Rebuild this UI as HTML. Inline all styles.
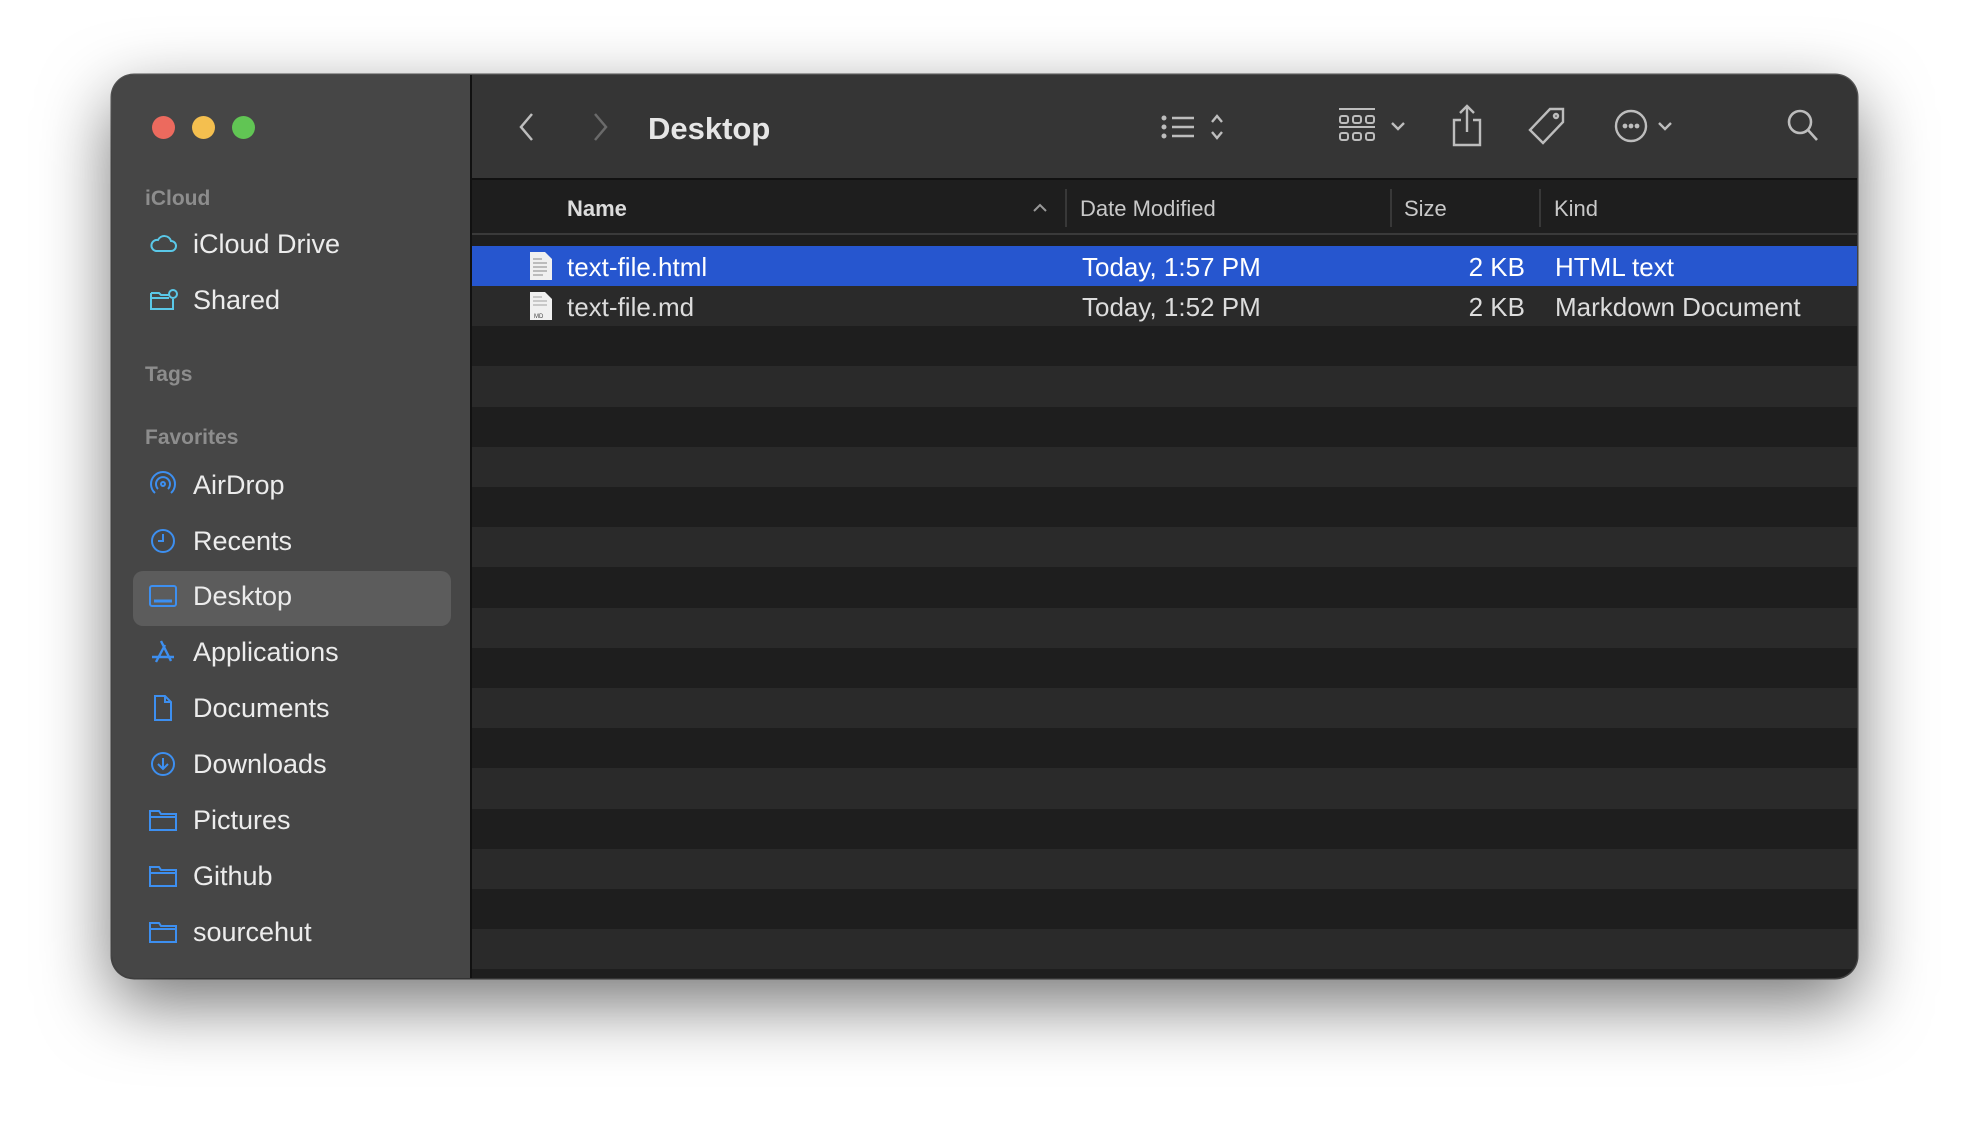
<!DOCTYPE html>
<html><head><meta charset="utf-8"><style>
*{margin:0;padding:0;box-sizing:border-box}
body{width:1968px;height:1126px;background:#fff;position:relative;overflow:hidden;font-family:"Liberation Sans",sans-serif}
.win{position:absolute;left:112px;top:75px;width:1745px;height:903px;border-radius:22px;background:#1e1e1e;overflow:hidden;box-shadow:0 25px 70px rgba(0,0,0,.55),0 0 0 1.5px #5a5a5a;}
.side{position:absolute;left:0;top:0;width:360px;height:100%;background:#464646;border-right:2px solid #111}
.tb{position:absolute;left:360px;top:0;right:0;height:105px;background:#353535;border-bottom:2px solid #111}
.hdr{position:absolute;left:360px;top:107px;right:0;height:53px;background:#1e1e1e;border-bottom:2px solid #3a3a3a}
.a{position:absolute;white-space:nowrap}
.dot{position:absolute;top:41px;width:23px;height:23px;border-radius:50%}
.sec{position:absolute;left:33px;font-size:21px;color:#8d8d8d;font-weight:bold}
.it{position:absolute;left:81px;font-size:27px;color:#ececec}
.row{position:absolute;left:360px;right:0;height:40.2px}
.rt{position:absolute;font-size:26px;color:#dcdcdc;top:6px;white-space:nowrap}
.hd{position:absolute;top:14px;font-size:22px;color:#c8c8c8}
.sep{position:absolute;top:7px;width:2px;height:38px;background:#383838}
</style></head><body>
<div class="win">
<div class="side">
 <div class="dot" style="left:40px;background:#ec6a5e"></div>
 <div class="dot" style="left:80px;background:#f4bf4f"></div>
 <div class="dot" style="left:120px;background:#61c554"></div>
 <div class="sec" style="top:112px">iCloud</div>
 <div class="sec" style="top:288px">Tags</div>
 <div class="sec" style="top:351px">Favorites</div>
 <div style="position:absolute;left:21px;top:496px;width:318px;height:55px;border-radius:10px;background:#5c5c5c"></div>
 <div class="it" style="top:154px"><svg viewBox="0 0 30 30" style="left:-45px;top:0;position:absolute;width:30px;height:30px"><path d="M8 22h15a5 5 0 0 0 0-10 7 7 0 0 0-13-1A5.5 5.5 0 0 0 8 22z" fill="none" stroke="#5ac8e8" stroke-width="2"/></svg>iCloud Drive</div>
 <div class="it" style="top:210px"><svg viewBox="0 0 30 30" style="left:-45px;top:0;position:absolute;width:30px;height:30px"><path d="M3 8h8l2 2h8M3 8v16h22V14M3 13h18" fill="none" stroke="#5ac8e8" stroke-width="2"/><circle cx="25" cy="9" r="4" fill="none" stroke="#5ac8e8" stroke-width="2"/></svg>Shared</div>
 <div class="it" style="top:395px"><svg viewBox="0 0 30 30" style="left:-45px;top:0;position:absolute;width:30px;height:30px" fill="none" stroke="#3d8ff0" stroke-width="2"><circle cx="15" cy="14" r="2"/><path d="M10 19a7 7 0 1 1 10 0M7 23a12 12 0 1 1 16 0"/></svg>AirDrop</div>
 <div class="it" style="top:451px"><svg viewBox="0 0 30 30" style="left:-45px;top:0;position:absolute;width:30px;height:30px" fill="none" stroke="#3d8ff0" stroke-width="2"><circle cx="15" cy="15" r="11"/><path d="M15 8v7h-5"/></svg>Recents</div>
 <div class="it" style="top:506px"><svg viewBox="0 0 30 30" style="left:-45px;top:0;position:absolute;width:30px;height:30px" fill="none" stroke="#3d8ff0" stroke-width="2"><rect x="2" y="5" width="26" height="20" rx="2"/><path d="M6 20h18" stroke-width="3"/></svg>Desktop</div>
 <div class="it" style="top:562px"><svg viewBox="0 0 30 30" style="left:-45px;top:0;position:absolute;width:30px;height:30px" fill="none" stroke="#3d8ff0" stroke-width="2.4"><path d="M13 4l10 20M17 8L8 25M4 20h22"/></svg>Applications</div>
 <div class="it" style="top:618px"><svg viewBox="0 0 30 30" style="left:-45px;top:0;position:absolute;width:30px;height:30px" fill="none" stroke="#3d8ff0" stroke-width="2"><path d="M7 3h10l6 6v18H7zM17 3v6h6"/></svg>Documents</div>
 <div class="it" style="top:674px"><svg viewBox="0 0 30 30" style="left:-45px;top:0;position:absolute;width:30px;height:30px" fill="none" stroke="#3d8ff0" stroke-width="2"><circle cx="15" cy="15" r="11"/><path d="M15 9v11M10 15l5 5 5-5"/></svg>Downloads</div>
 <div class="it" style="top:730px"><svg viewBox="0 0 30 30" style="left:-45px;top:0;position:absolute;width:30px;height:30px" fill="none" stroke="#3d8ff0" stroke-width="2"><path d="M2 6h9l2 3h15v16H2zM2 12h26"/></svg>Pictures</div>
 <div class="it" style="top:786px"><svg viewBox="0 0 30 30" style="left:-45px;top:0;position:absolute;width:30px;height:30px" fill="none" stroke="#3d8ff0" stroke-width="2"><path d="M2 6h9l2 3h15v16H2zM2 12h26"/></svg>Github</div>
 <div class="it" style="top:842px"><svg viewBox="0 0 30 30" style="left:-45px;top:0;position:absolute;width:30px;height:30px" fill="none" stroke="#3d8ff0" stroke-width="2"><path d="M2 6h9l2 3h15v16H2zM2 12h26"/></svg>sourcehut</div>
</div>
<div class="tb">
 <svg class="a" style="left:45px;top:36px" width="20" height="32" viewBox="0 0 20 32" fill="none" stroke="#bdbdbd" stroke-width="2.5"><path d="M15 3L4 16l11 13"/></svg>
 <svg class="a" style="left:118px;top:36px" width="20" height="32" viewBox="0 0 20 32" fill="none" stroke="#6a6a6a" stroke-width="2.5"><path d="M5 3l11 13L5 29"/></svg>
 <div class="a" style="left:176px;top:36px;font-size:31px;font-weight:bold;color:#e6e6e6">Desktop</div>
 <svg class="a" style="left:688px;top:37px" width="80" height="34" viewBox="0 0 80 34" fill="none" stroke="#bdbdbd" stroke-width="2.4"><path d="M12 6h22M12 15h22M12 24h22"/><circle cx="4" cy="6" r="1.3" fill="#bdbdbd"/><circle cx="4" cy="15" r="1.3" fill="#bdbdbd"/><circle cx="4" cy="24" r="1.3" fill="#bdbdbd"/><path d="M52 10l5-6 5 6M52 20l5 6 5-6"/></svg>
 <svg class="a" style="left:866px;top:32px" width="80" height="40" viewBox="0 0 80 40" fill="none" stroke="#bdbdbd" stroke-width="2"><path d="M1 2h36M1 20h36"/><rect x="2" y="9" width="8" height="7" rx="2"/><rect x="15" y="9" width="8" height="7" rx="2"/><rect x="28" y="9" width="8" height="7" rx="2"/><rect x="2" y="26" width="8" height="7" rx="2"/><rect x="15" y="26" width="8" height="7" rx="2"/><rect x="28" y="26" width="8" height="7" rx="2"/><path d="M54 16l6 6 6-6" stroke-width="2.4"/></svg>
 <svg class="a" style="left:977px;top:29px" width="36" height="44" viewBox="0 0 36 44" fill="none" stroke="#bdbdbd" stroke-width="2.4"><path d="M18 2v26M11 9l7-7 7 7M12 16H5v25h26V16h-7"/></svg>
 <svg class="a" style="left:1056px;top:31px" width="40" height="40" viewBox="0 0 40 40" fill="none" stroke="#bdbdbd" stroke-width="2.4"><path d="M22 3h13v13L15 37 2 24z"/><circle cx="28" cy="10" r="2"/></svg>
 <svg class="a" style="left:1141px;top:33px" width="70" height="38" viewBox="0 0 70 38" fill="none" stroke="#bdbdbd" stroke-width="2.4"><circle cx="18" cy="18" r="15"/><circle cx="12" cy="18" r="1.2" fill="#bdbdbd"/><circle cx="18" cy="18" r="1.2" fill="#bdbdbd"/><circle cx="24" cy="18" r="1.2" fill="#bdbdbd"/><path d="M46 15l6 6 6-6"/></svg>
 <svg class="a" style="left:1314px;top:33px" width="36" height="38" viewBox="0 0 36 38" fill="none" stroke="#bdbdbd" stroke-width="2.6"><circle cx="14" cy="14" r="11"/><path d="M22 22l9 10"/></svg>
</div>
<div class="hdr">
 <div class="hd" style="left:95px;font-weight:bold;color:#dcdcdc">Name</div>
 <svg class="a" style="left:560px;top:20px" width="16" height="12" viewBox="0 0 16 12" fill="none" stroke="#999" stroke-width="2"><path d="M2 9l6-6 6 6"/></svg>
 <div class="sep" style="left:593px"></div>
 <div class="hd" style="left:608px">Date Modified</div>
 <div class="sep" style="left:918px"></div>
 <div class="hd" style="left:932px">Size</div>
 <div class="sep" style="left:1067px"></div>
 <div class="hd" style="left:1082px">Kind</div>
</div>
<div class="row" style="top:171px;background:#2656cf">
 <svg class="a" style="left:57px;top:5px" width="24" height="30" viewBox="0 0 24 30"><path d="M1 1h15l7 7v21H1z" fill="#f0f0f0"/><path d="M4 8h9M4 12h14M4 16h14M4 20h14M4 24h10" stroke="#aaa" stroke-width="1.5"/></svg>
 <div class="rt" style="left:95px;color:#fff">text-file.html</div>
 <div class="rt" style="left:610px;color:#fff">Today, 1:57 PM</div>
 <div class="rt" style="right:332px;color:#fff">2 KB</div>
 <div class="rt" style="left:1083px;color:#fff">HTML text</div>
</div>
<div class="row" style="top:211px;background:#2a2a2a">
 <svg class="a" style="left:57px;top:5px" width="24" height="30" viewBox="0 0 24 30"><path d="M1 1h15l7 7v21H1z" fill="#f0f0f0"/><path d="M4 6h9M4 10h14M4 14h14" stroke="#bbb" stroke-width="1.5"/><text x="5" y="27" font-size="6" font-family="Liberation Sans" fill="#444">MD</text></svg>
 <div class="rt" style="left:95px">text-file.md</div>
 <div class="rt" style="left:610px">Today, 1:52 PM</div>
 <div class="rt" style="right:332px">2 KB</div>
 <div class="rt" style="left:1083px">Markdown Document</div>
</div>
<div class="row" style="top:291.4px;background:#2a2a2a"></div>
<div class="row" style="top:371.8px;background:#2a2a2a"></div>
<div class="row" style="top:452.2px;background:#2a2a2a"></div>
<div class="row" style="top:532.6px;background:#2a2a2a"></div>
<div class="row" style="top:613px;background:#2a2a2a"></div>
<div class="row" style="top:693.4px;background:#2a2a2a"></div>
<div class="row" style="top:773.8px;background:#2a2a2a"></div>
<div class="row" style="top:854.2px;background:#2a2a2a"></div>
</div>
</body></html>
